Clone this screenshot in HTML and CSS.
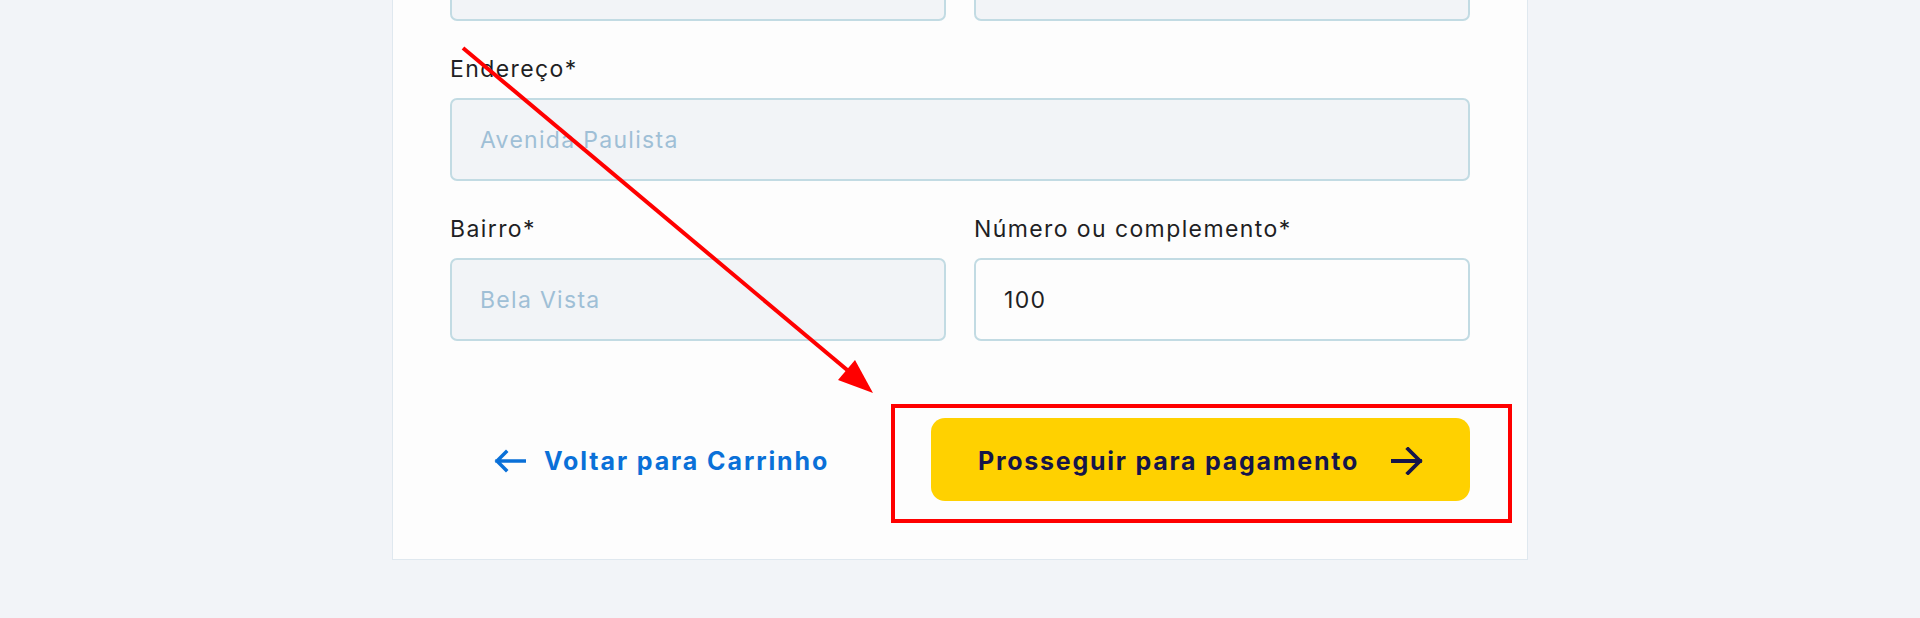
FILE: index.html
```html
<!DOCTYPE html>
<html lang="pt-BR">
<head>
    <meta charset="UTF-8">
    <meta name="viewport" content="width=device-width, initial-scale=1.0">
    <title>Checkout - Endereço de entrega</title>
    <link rel="stylesheet" href="styles.css">
</head>
<body>
    <!-- Cartão do formulário de endereço -->
    <div class="checkout-card">
        <div class="form-row">
            <div class="field">
                <input class="input" type="text" placeholder="01310-100" disabled>
            </div>
            <div class="field">
                <input class="input" type="text" placeholder="São Paulo" disabled>
            </div>
        </div>

        <div class="form-row single">
            <div class="field">
                <label class="label">Endereço*</label>
                <input class="input" type="text" placeholder="Avenida Paulista" disabled>
            </div>
        </div>

        <div class="form-row">
            <div class="field">
                <label class="label">Bairro*</label>
                <input class="input" type="text" placeholder="Bela Vista" disabled>
            </div>
            <div class="field">
                <label class="label">Número ou complemento*</label>
                <input class="input input-active" type="text" value="100">
            </div>
        </div>

        <!-- Ações -->
        <div class="actions">
            <a class="btn-link" href="#">
                <svg class="icon" width="32" height="24" viewBox="0 0 32 24" fill="none">
                    <path d="M31 12H3M12 3L3 12L12 21" stroke="currentColor" stroke-width="3.5" stroke-linecap="square"/>
                </svg>
                Voltar para Carrinho
            </a>
            <button class="btn-primary" type="button">
                Prosseguir para pagamento
                <svg class="icon" width="32" height="28" viewBox="0 0 32 28" fill="none">
                    <path d="M1 14H29M17 2L29 14L17 26" stroke="currentColor" stroke-width="3.8" stroke-linecap="square"/>
                </svg>
            </button>
        </div>
    </div>

    <!-- Anotação vermelha sobre a tela -->
    <div class="highlight-box"></div>
    <svg class="annotation-arrow" width="1920" height="618" viewBox="0 0 1920 618">
        <line x1="463" y1="48" x2="852" y2="374" stroke="#ff0000" stroke-width="4"/>
        <polygon points="873,393 838,380 855,360" fill="#ff0000"/>
    </svg>
</body>
</html>
```

FILE: styles.css
```css
/* Reset básico */
* {
    margin: 0;
    padding: 0;
    box-sizing: border-box;
}

/* Página - fundo cinza azulado */
body {
    height: 618px;
    overflow: hidden;
    background: #f2f4f8;
    font-family: Inter, "Noto Sans", sans-serif;
    color: #1f1f24;
}

/* Cartão principal (a página está rolada, topo fora da tela) */
.checkout-card {
    width: 1136px;
    margin: -101px auto 0;
    padding: 38px 57px 58px;
    background: #fdfdfd;
    border: 1px solid #dfe8ef;
}

.form-row {
    display: grid;
    grid-template-columns: 1fr 1fr;
    gap: 28px;
}

.form-row.single {
    grid-template-columns: 1fr;
}

.form-row + .form-row {
    margin-top: 34px;
}

.field {
    display: flex;
    flex-direction: column;
}

.label {
    font-size: 23px;
    line-height: 28px;
    letter-spacing: 1.4px;
    margin-bottom: 15px;
    color: #1f1f24;
}

/* Campos de texto */
.input {
    height: 83px;
    padding: 0 28px;
    font-family: inherit;
    font-size: 23px;
    letter-spacing: 1.3px;
    color: #1f1f24;
    background: #f2f4f7;
    border: 2px solid #c2dbe3;
    border-radius: 7px;
    outline: none;
}

.input::placeholder {
    color: #9fbfd6;
    opacity: 1;
}

.input-active {
    background: #fdfdfd;
}

/* Linha dos botões */
.actions {
    display: flex;
    justify-content: space-between;
    align-items: center;
    margin-top: 77px;
}

.btn-link {
    display: flex;
    align-items: center;
    gap: 18px;
    margin-top: 3px;
    padding: 0 44px;
    font-size: 25px;
    font-weight: 700;
    letter-spacing: 1.9px;
    color: #0a70d8;
    text-decoration: none;
}

.btn-primary {
    display: flex;
    align-items: center;
    justify-content: center;
    gap: 32px;
    width: 539px;
    height: 83px;
    padding-top: 3px;
    font-family: inherit;
    font-size: 25px;
    font-weight: 700;
    letter-spacing: 1.75px;
    color: #15154a;
    background: #ffd100;
    border: none;
    border-radius: 14px;
    cursor: pointer;
}

.icon {
    flex-shrink: 0;
}

/* Anotação: retângulo e seta vermelhos por cima da tela */
.highlight-box {
    position: absolute;
    left: 891px;
    top: 404px;
    width: 621px;
    height: 119px;
    border: 4px solid #ff0000;
}

.annotation-arrow {
    position: absolute;
    left: 0;
    top: 0;
    pointer-events: none;
}
```
